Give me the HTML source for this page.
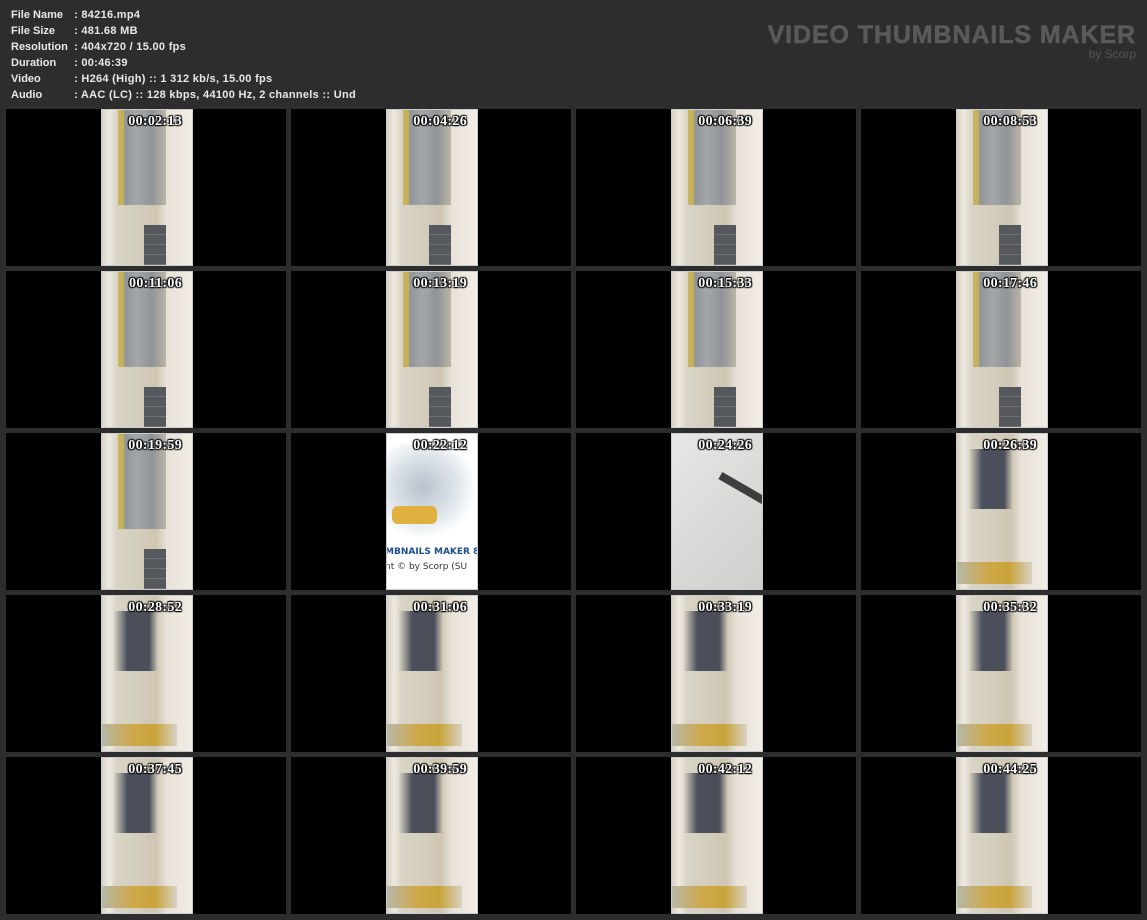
<!DOCTYPE html>
<html><head><meta charset="utf-8"><style>
*{margin:0;padding:0;box-sizing:border-box}
body{width:1147px;height:920px;background:#2d2d2d;position:relative;overflow:hidden;font-family:"Liberation Sans",sans-serif}
.info{position:absolute;left:11px;top:7px;font-size:11px;font-weight:bold;color:#e8e8e8;line-height:16px;letter-spacing:0.3px}
.info div{white-space:nowrap}.info span{display:inline-block;width:63px;letter-spacing:0}
.logo{position:absolute;right:11px;top:21px;text-align:right;color:#595959}
.logo b{font-family:"Liberation Sans",sans-serif;font-size:25px;font-weight:900;letter-spacing:0.9px;display:block;line-height:28px;-webkit-text-stroke:0.6px #595959}
.logo i{font-style:normal;font-size:12px;display:block;line-height:10px;color:#555}
.cell{position:absolute;width:280px;height:157px;background:#000}
.th{position:absolute;left:95px;top:0;width:92px;height:157px;border:1px solid #ccc;overflow:hidden;
background:linear-gradient(90deg,#d8d2c4 0,#eeeae0 8%,#d9d4c6 16%,#d3ccba 45%,#cfc6b2 60%,#e8e2d8 72%,#f2ede6 100%)}
.th:before{content:"";position:absolute;left:16px;top:0;width:48px;height:95px;background:linear-gradient(90deg,#c7b050 0,#c0a848 12%,#858b93 14%,#9aa0a6 40%,#858b93 70%,#b5aea0 100%);opacity:.85}
.th:after{content:"";position:absolute;left:42px;top:115px;width:22px;height:42px;background:repeating-linear-gradient(180deg,#55585c 0,#55585c 9px,#888 10px)}
.b .th:before{left:12px;top:15px;width:44px;height:60px;background:linear-gradient(90deg,#d8d2c4,#3b4150 30%,#3b4150 80%,#d4cbb8);opacity:.9}
.b .th:after{left:0;top:128px;width:75px;height:22px;background:linear-gradient(90deg,#b6b8a8,#cfa94a 40%,#c9a43a 70%,#d8d2c4)}
.t{position:absolute;right:10px;top:4px;font-family:"Liberation Serif",serif;font-weight:bold;font-size:14px;color:#fff;text-shadow:1px 1px 1px #000,-1px -1px 1px #000,1px -1px 1px #000,-1px 1px 1px #000;z-index:2;letter-spacing:.3px}
.owl.th{background:#fff}.owl.th:before{left:0;top:10px;width:90px;height:95px;background:radial-gradient(ellipse at 40% 45%,#b9c2cc 0,#dfe6ec 45%,#fff 70%);opacity:1}
.owl.th:after{left:5px;top:72px;width:45px;height:18px;background:#e0b040;border-radius:6px}
.owl .txt1{position:absolute;left:-2px;top:113px;font-family:"DejaVu Sans",sans-serif;font-size:9px;color:#1d4e8c;font-weight:bold;white-space:nowrap;z-index:3}
.owl .txt2{position:absolute;left:-2px;top:128px;font-family:"DejaVu Sans",sans-serif;font-size:9px;color:#333;white-space:nowrap;z-index:3}
.tile.th{background:linear-gradient(135deg,#e7e7e5,#d8d8d6 60%,#cfcfcd)}.tile.th:before{left:45px;top:50px;width:50px;height:8px;background:#222;opacity:.85;transform:rotate(30deg)}.tile.th:after{display:none}
</style></head><body>
<div class="info">
<div><span>File Name</span>: 84216.mp4</div>
<div><span>File Size</span>: 481.68 MB</div>
<div><span>Resolution</span>: 404x720 / 15.00 fps</div>
<div><span>Duration</span>: 00:46:39</div>
<div><span>Video</span>: H264 (High) :: 1 312 kb/s, 15.00 fps</div>
<div><span>Audio</span>: AAC (LC) :: 128 kbps, 44100 Hz, 2 channels :: Und</div>
</div>
<div class="logo"><b>VIDEO THUMBNAILS MAKER</b><i>by Scorp</i></div>

<div class="cell" style="left:6px;top:109px"><div class="th"><div class="t">00:02:13</div></div></div>
<div class="cell" style="left:291px;top:109px"><div class="th"><div class="t">00:04:26</div></div></div>
<div class="cell" style="left:576px;top:109px"><div class="th"><div class="t">00:06:39</div></div></div>
<div class="cell" style="left:861px;top:109px"><div class="th"><div class="t">00:08:53</div></div></div>

<div class="cell" style="left:6px;top:271px"><div class="th"><div class="t">00:11:06</div></div></div>
<div class="cell" style="left:291px;top:271px"><div class="th"><div class="t">00:13:19</div></div></div>
<div class="cell" style="left:576px;top:271px"><div class="th"><div class="t">00:15:33</div></div></div>
<div class="cell" style="left:861px;top:271px"><div class="th"><div class="t">00:17:46</div></div></div>

<div class="cell" style="left:6px;top:433px"><div class="th"><div class="t">00:19:59</div></div></div>
<div class="cell" style="left:291px;top:433px"><div class="th owl"><div class="t">00:22:12</div><div class="txt1">MBNAILS MAKER 8</div><div class="txt2">nt © by Scorp (SU</div></div></div>
<div class="cell" style="left:576px;top:433px"><div class="th tile"><div class="t">00:24:26</div></div></div>
<div class="cell b" style="left:861px;top:433px"><div class="th"><div class="t">00:26:39</div></div></div>

<div class="cell b" style="left:6px;top:595px"><div class="th"><div class="t">00:28:52</div></div></div>
<div class="cell b" style="left:291px;top:595px"><div class="th"><div class="t">00:31:06</div></div></div>
<div class="cell b" style="left:576px;top:595px"><div class="th"><div class="t">00:33:19</div></div></div>
<div class="cell b" style="left:861px;top:595px"><div class="th"><div class="t">00:35:32</div></div></div>

<div class="cell b" style="left:6px;top:757px"><div class="th"><div class="t">00:37:45</div></div></div>
<div class="cell b" style="left:291px;top:757px"><div class="th"><div class="t">00:39:59</div></div></div>
<div class="cell b" style="left:576px;top:757px"><div class="th"><div class="t">00:42:12</div></div></div>
<div class="cell b" style="left:861px;top:757px"><div class="th"><div class="t">00:44:25</div></div></div>
</body></html>
